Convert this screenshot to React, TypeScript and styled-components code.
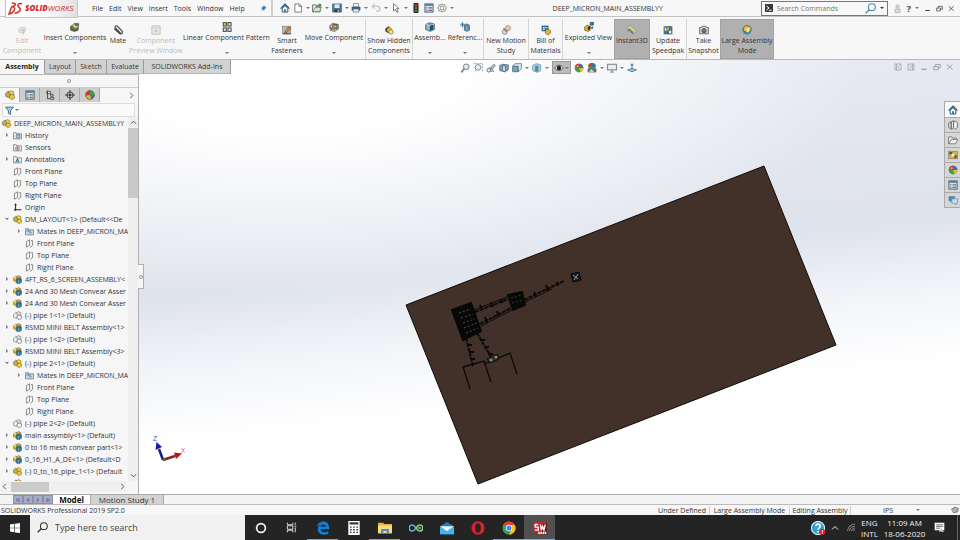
import React from "react";
import styled, { createGlobalStyle, css } from "styled-components";

const UI = `"Open Sans", "Noto Sans", sans-serif`;

const GlobalStyle = createGlobalStyle`
  * { box-sizing: border-box; }
  html, body { margin: 0; height: 100%; }
  body { font-family: ${UI}; font-size: 7px; line-height: 9px; color: #333; background: #f6f6f6; overflow: hidden; }
  button, input { font: inherit; color: inherit; }
  button { border: 0; background: none; padding: 0; margin: 0; }
  ul { list-style: none; margin: 0; padding: 0; }
`;

/* ---------- icons ---------- */

const S = styled.svg<{ $s?: number }>`
  width: ${(p) => p.$s ?? 10}px;
  height: ${(p) => p.$s ?? 10}px;
  flex: none;
  display: block;
`;

const glyphs: Record<string, React.ReactNode> = {
  home: <><path d="M1 9 8 2l7 7" fill="none" stroke="#1f4e6e" strokeWidth="2" /><path d="M3.500 8.500v6h9v-6L8 4.500z" fill="#fff" stroke="#1f4e6e" strokeWidth="1.500" /><path d="M6.500 14v-4h3v4z" fill="#2f6f96" /></>,
  doc: <path d="M3 1.500h7l3.500 3.500v9.500H3zM9.500 2v3.500h4" fill="#fff" stroke="#666" strokeWidth="1.300" />,
  open: <><path d="M1 14V3h5l1 2h6v9z" fill="#f4f4f4" stroke="#555" strokeWidth="1.300" /><path d="M1 14l4-7h10l-3 7z" fill="#ddd" stroke="#555" /><path d="M6 7c1-4 3-5 6-5V0l4 3.500L12 7V5C9 5 8 6 6 7z" fill="#4a9a3e" /></>,
  save: <><path d="M1 1.500h14v13H1z" fill="#4a7c9c" stroke="#27506b" /><path d="M4 2h8v6H4z" fill="#dce8ef" /><path d="M4 10.500h8v4H4z" fill="#333" /><path d="M9 11h2v3H9z" fill="#ddd" /></>,
  print: <><path d="M4 1h8v5H4z" fill="#fff" stroke="#456" /><path d="M1 6h14v6H1z" fill="#34637f" /><path d="M3.500 9.500h9v5h-9z" fill="#e6eef3" stroke="#34637f" /></>,
  undo: <path d="M2 5h8a4 4 0 0 1 0 8H8M6 1 2 5l4 4" fill="none" stroke="#c4c4c4" strokeWidth="2" />,
  cursor: <path d="M4 1v12l3-3 2.500 5 2-1L9 9h4z" fill="#fff" stroke="#555" strokeWidth="1.200" />,
  traffic: <><rect x="4" y="0" width="8" height="16" rx="1.500" fill="#222" /><circle cx="8" cy="3.500" r="2.300" fill="#c33" /><circle cx="8" cy="8" r="2" fill="#8a6a2b" /><circle cx="8" cy="12.500" r="2.300" fill="#2a9b3c" /></>,
  list: <><rect x="1.500" y="1.500" width="13" height="13" fill="#e8f0f5" stroke="#38576b" strokeWidth="1.500" /><path d="M2 2h12v2.500H2z" fill="#3f7697" /><path d="M3.500 7h2M3.500 9.500h2M3.500 12h2" stroke="#3f7697" strokeWidth="1.500" /><path d="M7 7h6M7 9.500h6M7 12h6" stroke="#555" strokeWidth="1.200" /></>,
  gear: <><path d="M8 1.500 10 3l2.500-.2.700 2.500L15 7.500 13.500 10l-.3 2.500-2.700.3L8 14.500l-2.300-1.700-2.800-.3L2.500 10 1 7.500l1.800-2.200L3.500 3 6 3z" fill="#f3f3f3" stroke="#777" strokeWidth="1.300" /><circle cx="8" cy="8" r="3" fill="#fff" stroke="#777" strokeWidth="1.300" /></>,
  asm: <><path d="M1 5 5 2l4 2v6l-4 2-4-2z" fill="#e2ae22" stroke="#4e4420" strokeWidth=".8" /><path d="M1 5l4 2 4-3-4-2z" fill="#f6dc73" /><path d="M6 3l4-2 4 2v4H7z" fill="#d9b040" stroke="#444" strokeWidth=".8" /><path d="M6 7l5-2 4 2v6l-5 3-4-2z" fill="#2f7398" stroke="#1d3f53" strokeWidth=".8" /><path d="M10 8.500v7" stroke="#9cc6da" strokeWidth="1.200" /></>,
  asmYellow: <><path d="M1 5 5 2l4 2v6l-4 2-4-2z" fill="#d8a821" stroke="#4e4420" strokeWidth=".8" /><path d="M6 3l4-2 4 2v5l-4 1z" fill="#f0d058" stroke="#5c4c18" strokeWidth=".8" /><path d="M7 9l4-2 4 2v4l-4 2.500L7 13z" fill="#edc63c" stroke="#5c4c18" strokeWidth=".8" /><path d="M2 6l3 1v4" stroke="#8eb9cc" strokeWidth="1.500" fill="none" /></>,
  asmGhost: <><path d="M1 6 5 3l4 2v6l-4 2-4-2z" fill="#eee" stroke="#777" strokeWidth="1.200" /><path d="M6 3l4-2 4 2v5l-4 1z" fill="#ddd" stroke="#777" strokeWidth="1.200" /><path d="M7 9l4-2 4 2v4l-4 2.500L7 13z" fill="#f5f5f5" stroke="#666" strokeWidth="1.200" /></>,
  disabled: <><path d="M2 7l4-4 7 1 1 4-6 5-5-2z" fill="#ddd" stroke="#c8c8c8" /><path d="M8 7l4 3-3 5" fill="none" stroke="#c2c2c2" strokeWidth="2" /></>,
  winGhost: <><rect x="1.500" y="1.500" width="13" height="13" fill="#eee" stroke="#bdbdbd" strokeWidth="1.500" /><path d="M2 4.500h12" stroke="#bdbdbd" /><path d="M5 8l3-2 3 2v4H5z" fill="#d0d0d0" /></>,
  clip: <path d="M13 14 4 5a2 2 0 0 1 3-3l8 8a3 3 0 0 1-4 4L2 6M10 11 5 6" fill="none" stroke="#444" strokeWidth="1.700" />,
  insert: <><path d="M1 7l5-2 7 2v6l-6 2-6-2z" fill="#4a7d42" stroke="#333" /><path d="M3 6l4-4 7 1-1 6-5 2z" fill="#e6c650" stroke="#444" /><path d="M7 2h7v4H8z" fill="#3d6e8a" /></>,
  pattern: <g strokeWidth="1.600" stroke="#444"><rect x="2" y="1" width="5" height="5.500" fill="#e9c84a" /><rect x="9.500" y="1" width="5" height="5.500" fill="#ddd" /><rect x="2" y="9.500" width="5" height="5.500" fill="#ddd" /><rect x="9.500" y="9.500" width="5" height="5.500" fill="#eee" /></g>,
  fastener: <><rect x="1" y="2" width="13" height="12" fill="#b9b9b9" stroke="#777" /><path d="M4 12l6-9 4 2-6 7z" fill="#e08a3c" stroke="#5a4632" /><path d="M2 14h12" stroke="#555" strokeWidth="2" /></>,
  move: <><path d="M1 6l5-4 9 2v7l-6 4-7-2z" fill="#c9c0a4" stroke="#444" /><path d="M6 4h7v7H6z" fill="#dcb44a" stroke="#333" /><path d="M8 6h4v3H8z" fill="#f5edc0" stroke="#444" /><path d="M2 8l3 4" stroke="#666" strokeWidth="2" /></>,
  eyeCube: <><path d="M2 6l5-4 5 3v5l-5 3-5-3z" fill="#444" /><path d="M5 6l5-3 3 3v4l-4 2-4-2z" fill="#e9b932" /><circle cx="11" cy="11" r="3.500" fill="#f4e6a2" stroke="#6b5518" /></>,
  blueCube: <><path d="M1 4l6-3 8 2v9l-7 3-7-3z" fill="#6fa3be" stroke="#345" /><path d="M1 4l7 2 7-3M5 5v8" stroke="#e6f0f5" fill="none" /><path d="M8 6l5-1.500v7L8 14z" fill="#234b62" /></>,
  reference: <><path d="M7 5l4-2 4 2v8l-4 2-4-2z" fill="#4b8fb2" stroke="#345" /><path d="M11 7v8" stroke="#bcd9e6" /><path d="M4 0v9M0 4.500h8M1.500 2l5 5M6.500 2l-5 5" stroke="#3c7796" strokeWidth="1.300" /></>,
  motion: <><circle cx="6" cy="11" r="4" fill="#d7d7d7" stroke="#666" /><circle cx="11" cy="5" r="4" fill="#eec9b4" stroke="#8a6450" /><path d="M4 5l5 6" stroke="#777" strokeWidth="2" /></>,
  bom: <><path d="M1 1h11v9H1z" fill="#34637f" /><path d="M3 3h3v2H3zM7 3h3v2H7zM3 6h3v2H3z" fill="#dce8ef" /><path d="M7 9l4-3 4 3v4l-4 3-4-3z" fill="#e4b62f" stroke="#65521b" /></>,
  exploded: <><path d="M1 8l4-3 5 2v6l-4 2-5-2z" fill="#e4b62f" stroke="#4f451f" /><path d="M10 0h5v5h-5z" fill="#3d7ea4" stroke="#234" /><path d="M6 8l4-2v5l-4 2z" fill="#333" /><circle cx="13" cy="9" r="2" fill="#3d7ea4" /></>,
  instant: <><path d="M1 4l4-3 10 9-4 4z" fill="#f3dfa0" stroke="#8a7a45" /><path d="M4 5l8 7" stroke="#caa23a" strokeWidth="2" /><path d="M1 9l3-1 6 6" fill="none" stroke="#3f7ea3" strokeWidth="2" /></>,
  update: <><rect x="1" y="2" width="14" height="13" fill="#3f7697" /><path d="M3 4h4v5H3zM9 9h4v4H9z" fill="#f5f5f5" /><path d="M5 3h6l-3 11z" fill="#e6bd36" stroke="#333" /></>,
  camera: <><path d="M1 4h3l1-2h6l1 2h3v10H1z" fill="#d9d9d9" stroke="#555" strokeWidth="1.300" /><circle cx="8" cy="9" r="3.500" fill="#777" stroke="#333" /></>,
  large: <><circle cx="8" cy="8" r="7.500" fill="#3f8db6" /><path d="M2 4l5-3 7 2v4l-5 5-6-2z" fill="#edc63c" stroke="#6b5518" /><path d="M8 6l4-1v5l-4 2z" fill="#f8e9ac" /></>,
  zoom: <><circle cx="10" cy="6" r="4.500" fill="#dfeaf0" stroke="#6d818e" strokeWidth="1.600" /><path d="M7 9l-5 6" stroke="#6d818e" strokeWidth="2.500" /></>,
  zoomArea: <><circle cx="8" cy="7" r="4.500" fill="#e5edf2" stroke="#7a8c97" strokeWidth="1.500" /><path d="M1 1h14v13M5 11l-3 4" stroke="#8b9aa3" strokeDasharray="3 1.500" fill="none" strokeWidth="1.500" /></>,
  prev: <><path d="M6 8l6-6 3 2-5 6z" fill="#a9bcc7" stroke="#5f7685" /><path d="M6 8l5 3M7 13h6" stroke="#5f7685" strokeWidth="1.500" /><circle cx="4.500" cy="11.500" r="3" fill="#e6eef3" stroke="#5f7685" strokeWidth="1.500" /></>,
  section: <><path d="M1 4l5-2 9 1v8l-6 3-8-2z" fill="#79a4bc" stroke="#3c5564" /><path d="M6 4l4 1v9l-4-1z" fill="#eef4f7" stroke="#33495a" /></>,
  orient: <><path d="M1 5h9v9H1z" fill="#6fa3be" stroke="#3c5564" /><path d="M1 5l4-4h10v8l-5 5V5z" fill="#dce9f0" stroke="#3c5564" /></>,
  display: <><path d="M1 4l6-3 7 2v9l-6 3-7-3z" fill="#a9cbdc" stroke="#5c8aa2" /><path d="M5 5l5-1v9l-5 1z" fill="#4f8cab" /></>,
  eye: <><path d="M1 8c4-6 10-6 14 0-4 5-10 5-14 0z" fill="#e9e9e9" stroke="#333" strokeWidth="1.200" /><circle cx="8" cy="8" r="3.500" fill="#222" /></>,
  ball: <><circle cx="8" cy="8" r="7" fill="#3a9e4d" /><path d="M8 8V1a7 7 0 0 1 7 7z" fill="#3a6fb8" /><path d="M8 8 1.500 5A7 7 0 0 1 8 1z" fill="#d33a30" /><path d="M8 8h7a7 7 0 0 1-5 6.500z" fill="#e9b92c" /><circle cx="6" cy="5" r="1.500" fill="#fff" opacity=".6" /></>,
  appearance: <><circle cx="8" cy="8" r="7" fill="#e9b92c" stroke="#333" /><path d="M8 8V1a7 7 0 0 1 7 7z" fill="#3a9e4d" /><path d="M8 8 1 9A7 7 0 0 1 8 1z" fill="#d33a30" /><path d="M8 8h7a7 7 0 0 1-5 6.500z" fill="#3a6fb8" /></>,
  scene: <><circle cx="8" cy="6" r="6" fill="#3a9e4d" /><path d="M8 6V0a6 6 0 0 1 6 6z" fill="#3a6fb8" /><path d="M8 6 2 5a6 6 0 0 1 6-5z" fill="#d33a30" /><path d="M1 9h14v6H1z" fill="#6a6a6a" /><path d="M3 14l4-4 5 4z" fill="#ddd" /></>,
  monitor: <><rect x="1" y="2" width="14" height="9" fill="#e9eef1" stroke="#777" strokeWidth="1.500" /><path d="M8 11v3M5 14.500h6" stroke="#777" strokeWidth="1.500" /></>,
  anchor: <><path d="M8 2v11M1 11l7 3 7-3-7-2z" fill="none" stroke="#477d9c" strokeWidth="1.600" /><path d="M5 4l3-3.500L11 4z" fill="#477d9c" /></>,
  filter: <path d="M1 2h14L10 8v7l-4-2V8z" fill="#a9cbdc" stroke="#2f5d78" strokeWidth="1.500" />,
  cfg: <><path d="M3 2h6v4H3zM9 7h4v3H9zM9 12h5v3H9z" fill="#ddd" stroke="#444" strokeWidth="1.300" /><path d="M4 1v13h4" stroke="#444" fill="none" strokeWidth="1.500" /></>,
  target: <><circle cx="8" cy="8" r="5" fill="none" stroke="#333" strokeWidth="1.500" /><path d="M8 0v16M0 8h16" stroke="#333" strokeWidth="1.500" /><circle cx="8" cy="8" r="1.500" fill="#333" /></>,
  history: <><path d="M1 14V3h5l1 2h8v9z" fill="#eef0f2" stroke="#666" strokeWidth="1.200" /><circle cx="9" cy="9" r="3.500" fill="#cfe2ec" stroke="#2f5d78" strokeWidth="1.300" /><path d="M9 7v2h2" stroke="#2f5d78" fill="none" /></>,
  sensor: <><path d="M1 14V3h5l1 2h8v9z" fill="#eef0f2" stroke="#666" strokeWidth="1.200" /><circle cx="8" cy="9.500" r="3.500" fill="#ddd" stroke="#555" /><circle cx="8" cy="9.500" r="1.500" fill="#b33" /></>,
  annot: <><path d="M1 14V3h5l1 2h8v9z" fill="#eef0f2" stroke="#666" strokeWidth="1.200" /><path d="M5 13l3-7 3 7M6 11h4" fill="none" stroke="#2f6c90" strokeWidth="1.700" /></>,
  mates: <><path d="M1 14V3h5l1 2h8v9z" fill="#c9dfea" stroke="#587180" strokeWidth="1.200" /><path d="M5 7l6 5M4 9a2 2 0 0 1 3-3l5 4" stroke="#4a6a7c" strokeWidth="1.300" fill="none" /></>,
  plane: <path d="M2.500 4.500 8 1.500v10l-5.500 3zM10 3h3.500v8.500L9 15" fill="none" stroke="#6a6a6a" strokeWidth="1.300" />,
  origin: <><path d="M4.500 1v11H15" fill="none" stroke="#333" strokeWidth="2" /><path d="M2 4l2.500-3L7 4" fill="#333" /><circle cx="4" cy="12" r="2" fill="#333" /></>,
  books: <><path d="M1 5l4-2v10l-1 1-3-2zM5 3l4-2v12l-4 2z" fill="#e6e6e6" stroke="#555" strokeWidth="1.200" /><path d="M9 3l3-1 3 2v8l-4 3-2-2z" fill="#f2f2f2" stroke="#555" strokeWidth="1.200" /></>,
  folder: <path d="M1 14V3h5l1 2h6v2M1 14l4-7h11l-4 7z" fill="#eee" stroke="#666" strokeWidth="1.200" />,
  palette: <><rect x="1" y="2" width="14" height="12" fill="#d4b641" stroke="#777" /><path d="M2 3h5v4H2zM10 8h4v5h-4z" fill="#5c6340" /><circle cx="8" cy="8" r="2.500" fill="#f5edc0" /></>,
  chat: <><path d="M1 2h10v7H6l-3 3V9H1z" fill="#4d88a7" /><path d="M6 6h9v7h-2v3l-3-3H6z" fill="#c6dfeb" stroke="#4d88a7" /></>,
  user: <><circle cx="8" cy="4.500" r="3" fill="#ddd" stroke="#999" /><path d="M3.500 15V9h9v6z" fill="#ddd" stroke="#999" /></>,
  min: <path d="M3 12.500h10" stroke="currentColor" strokeWidth="2.500" />,
  restore: <path d="M1.500 7h9v6.500h-9zM5 7V3h9.500v6.500h-4" fill="none" stroke="currentColor" strokeWidth="1.700" />,
  close: <path d="M2 3l11 10M13 3 2 13" stroke="currentColor" strokeWidth="1.800" />,
  paneL: <><rect x="2" y="2" width="12" height="12" fill="none" stroke="currentColor" strokeWidth="1.400" /><path d="M5 2v12M11 5 8 8l3 3" fill="none" stroke="currentColor" strokeWidth="1.400" /></>,
  paneR: <><rect x="2" y="2" width="12" height="12" fill="none" stroke="currentColor" strokeWidth="1.400" /><path d="M6 5l3 3-3 3M11 2v12" fill="none" stroke="currentColor" strokeWidth="1.400" /></>,
  pin: <path d="M9 1l6 6-2 .5-3 3-.5 3L6 10l-4 5 3-6-3-3 3-.5 3-3z" fill="#3a82b0" />,
  prompt: <><rect width="16" height="16" fill="#3c3c3c" /><path d="M3 4l5 4-5 4M8 12.500h5" fill="none" stroke="#fff" strokeWidth="2" /></>,
  mag: <><circle cx="10" cy="6" r="5" fill="none" stroke="currentColor" strokeWidth="1.500" /><path d="M6.500 9.500 1 15" stroke="currentColor" strokeWidth="1.800" /></>,
  right: <path d="M5 2l6 6-6 6" fill="none" stroke="#444" strokeWidth="2" />,
  left: <path d="M11 2 5 8l6 6" fill="none" stroke="#444" strokeWidth="2" />,
  up: <path d="M2 11l6-6 6 6" fill="none" stroke="currentColor" strokeWidth="2" />,
  down: <path d="M2 5l6 6 6-6" fill="none" stroke="currentColor" strokeWidth="2" />,
  sheet: <><path d="M1 6l7-4 7 3-2 7-8 2z" fill="#999" stroke="#555" /><path d="M3 8l8-3M4 11l8-3" stroke="#eee" /></>,
  windows: <path d="M0 2.300 7 1.200v6.300H0zM8 1l8-1v7.500H8zM0 8.500h7v6.300L0 13.700zM8 8.500h8V16l-8-1z" fill="#fff" />,
  cortana: <circle cx="8" cy="8" r="5" fill="none" stroke="#f0f0f0" strokeWidth="2" />,
  taskview: <path d="M2 1v3h8V1M2 15v-3h8v3M2 5.500h8v5H2zM13.500 1v3M13.500 8v7M12 6h3" fill="none" stroke="#ddd" strokeWidth="1.400" />,
  edge: <path d="M1 7.500C1.500 3 4.500.5 8.300.5 12.500.5 15 3.500 15 7.500v2H5.300c.3 4 5.500 4 8.700 2.200v3C9 17 2 15.500 2 9.500 2 7 3.500 5 6 4 4 4 2 5.500 1 7.500zm4.300-.8h5.900c0-3.700-5.500-3.700-5.900 0z" fill="#1180d8" />,
  calc: <><rect x="1.500" y="0" width="13" height="16" fill="#fff" /><path d="M3 1.500h10v2.500H3z" fill="#333" /><path d="M3.500 7h9M3.500 10h9M3.500 13h9" stroke="#333" strokeWidth="1.600" strokeDasharray="1.800 1.800" /></>,
  explorer: <><path d="M0 2h6l1 1.500h9V14H0z" fill="#e8b33a" /><path d="M0 5h16v9H0z" fill="#fbd978" /><path d="M3.500 14V9h9v5H10v-2.500H6V14z" fill="#3f93cf" /></>,
  infinity: <><path d="M8 8C6 5 5 4.500 3.800 4.500a3.300 3.300 0 0 0 0 7C5.500 11.500 7 9.500 8 8" fill="none" stroke="#59b4cb" strokeWidth="1.700" /><path d="M8 8c1-1.500 2.500-3.500 4.200-3.500a3.300 3.300 0 0 1 0 7C10.500 11.500 9 9.500 8 8M10.500 8h3" fill="none" stroke="#93cf8d" strokeWidth="1.700" /></>,
  mail: <><path d="M0 6l8-5 8 5v9H0z" fill="#1c7cc4" /><path d="M0 6h16l-8 6z" fill="#f5f5f5" /><path d="M0 6l8 6 8-6v9H0z" fill="#42b4ee" /></>,
  opera: <><ellipse cx="8" cy="8" rx="7.500" ry="7.800" fill="#e0202c" /><ellipse cx="8" cy="8" rx="3.300" ry="5.500" fill="#252525" /></>,
  chrome: <><circle cx="8" cy="8" r="7.500" fill="#34a353" /><path d="M8 8 1.500 4.200a7.500 7.500 0 0 1 13 0z" fill="#e34133" /><path d="M8 4.500h6.600A7.500 7.500 0 0 1 8 15.500L11 9z" fill="#fbc116" /><circle cx="8" cy="8" r="3.700" fill="#fff" /><circle cx="8" cy="8" r="2.900" fill="#4688f1" /></>,
  sw: <><path d="M0 2l8-2 8 2v10l-7 4-9-4z" fill="#c6212b" /><path d="M10 4l6-2v10l-6 3z" fill="#7d1018" /><path d="M6 4H2.500v3H6v3.500H2M8.500 4l1 6.500L11 6l1.500 4.500L14 4" fill="none" stroke="#fff" strokeWidth="1.500" /><path d="M6 13.500h9" stroke="#eee" strokeWidth="2.500" strokeDasharray="1.800 .6" /></>,
  help: <><circle cx="8" cy="8" r="7.500" fill="#2e9fd0" stroke="#e8f4fa" strokeWidth="1.200" /><path d="M5.500 6c0-3.500 5-3.500 5 0 0 2-2.500 2-2.500 4M8 11.500v1.500" fill="none" stroke="#fff" strokeWidth="1.800" /><circle cx="13" cy="12.500" r="3.300" fill="#e01b22" /><path d="M13 10.500v2.500M13 13.800v.8" stroke="#fff" strokeWidth="1.200" /></>,
  wifi: <path d="M1 14C2 7 7 2 14 2M4.500 14C5 9 9 5.500 14 5.500M8 14c.5-3 3-5 6-5M11 14c.5-1.500 1.500-2 3-2" fill="none" stroke="#aaa" strokeWidth="1.400" />,
  notif: <><path d="M1 1h14v11h-4l-3 3v-3H1z" fill="#fff" /><path d="M3 4h10M3 6.500h10M3 9h6" stroke="#444" strokeWidth="1.100" /><path d="M11 9a3 3 0 1 0 4 4 4 4 0 0 1-4-4z" fill="#bbb" /></>,
};

const Icon = ({ n, s }: { n: string; s?: number }) => (
  <S viewBox="0 0 16 16" $s={s} aria-hidden="true">{glyphs[n]}</S>
);

const Caret = styled.span<{ $c?: string }>`
  flex: none;
  width: 0;
  height: 0;
  border-left: 2px solid transparent;
  border-right: 2px solid transparent;
  border-top: 2px solid ${(p) => p.$c ?? "#777"};
`;

const dot = css`
  &::after {
    content: "";
    box-sizing: border-box;
    width: 4px;
    height: 4px;
    border: 1px solid #999;
    border-radius: 50%;
  }
`;

/* ---------- page frame ---------- */

const Page = styled.div`
  display: flex;
  flex-direction: column;
  height: 100vh;
`;

/* ---------- title bar ---------- */

const TitleBar = styled.header`
  display: flex;
  align-items: center;
  justify-content: space-between;
  height: 17px;
  flex: none;
  background: #f7f7f7;
  border-bottom: 1px solid #c2c2c2;
`;
const TitleLeft = styled.div`
  display: flex;
  align-items: center;
  height: 17px;
`;
const Brand = styled.div`
  display: flex;
  align-items: center;
  gap: 2px;
  align-self: flex-start;
  width: 73px;
  height: 18px;
  margin: 0 14px 0 5px;
  padding-left: 2px;
  border: 1px solid #c8c8c8;
  border-top: 0;
  background: linear-gradient(100deg, #fff 50%, #dedede);
  color: #cf2f2c;
  font: italic 8px/16px ${UI};
  z-index: 1;
  white-space: nowrap;
  b { font-weight: 800; }
`;
const Menu = styled.nav`
  display: flex;
  gap: 6px;
  margin-right: 15px;
`;
const QuickBar = styled.div`
  display: flex;
  align-items: center;
  height: 16px;
  margin-left: 4px;
  padding-left: 7px;
  border-left: 2px solid #d0d0d0;
`;
const QuickBtn = styled.button<{ $w: number }>`
  display: flex;
  align-items: center;
  gap: 3px;
  width: ${(p) => p.$w}px;
  flex: none;
`;
const DocName = styled.h1`
  margin: 0;
  font: inherit;
  white-space: nowrap;
`;
const TitleRight = styled.div`
  display: flex;
  align-items: center;
  gap: 5px;
  padding-right: 5px;
`;
const SearchBox = styled.label`
  display: flex;
  align-items: center;
  gap: 4px;
  width: 127px;
  height: 15px;
  padding: 0 3px;
  border: 1px solid #777;
  background: #f8f8f8;
  color: #4d88a7;
  input { flex: 1; min-width: 0; border: 0; outline: 0; padding: 0; background: none; color: #666; }
  input::placeholder { color: #777; opacity: 1; }
`;
const BarBtn = styled.button<{ $dim?: boolean }>`
  display: flex;
  align-items: center;
  gap: 4px;
  font-weight: 700;
  font-size: 9px;
  color: ${(p) => (p.$dim ? "#999" : "#444")};
`;

/* ---------- ribbon ---------- */

const Ribbon = styled.div`
  display: flex;
  flex: none;
  height: 43px;
  padding-top: 2px;
  background: #f7f7f7;
  border-bottom: 1px solid #b8b8b8;
`;
const Tool = styled.button<{ $w: number; $sep?: boolean; $on?: boolean; $off?: boolean; $drop?: boolean }>`
  display: flex;
  flex-direction: column;
  align-items: center;
  flex: none;
  width: ${(p) => p.$w}px;
  padding-top: ${(p) => (p.$drop ? 3 : 6)}px;
  line-height: 10px;
  white-space: nowrap;
  border-right: ${(p) => (p.$sep ? "1px solid #d4d4d4" : "0")};
  ${(p) => p.$on && css`background: #b0b0b0; border: 1px solid #a2a2a2; padding-top: 5px;`}
  ${(p) => p.$off && css`color: #bdbdbd;`}
  ${S} { margin-bottom: 1px; }
  ${Caret} { margin-top: 9px; }
`;

const tools: { i: string; t: string[]; w: number; sep?: boolean; on?: boolean; off?: boolean; drop?: boolean }[] = [
  { i: "disabled", t: ["Edit", "Component"], w: 44, off: true },
  { i: "insert", t: ["Insert Components"], w: 62, drop: true },
  { i: "clip", t: ["Mate"], w: 24 },
  { i: "winGhost", t: ["Component", "Preview Window"], w: 52, off: true },
  { i: "pattern", t: ["Linear Component Pattern"], w: 89, drop: true },
  { i: "fastener", t: ["Smart", "Fasteners"], w: 32 },
  { i: "move", t: ["Move Component"], w: 63, drop: true, sep: true },
  { i: "eyeCube", t: ["Show Hidden", "Components"], w: 47, sep: true },
  { i: "blueCube", t: ["Assemb..."], w: 34, drop: true },
  { i: "reference", t: ["Referenc..."], w: 37, drop: true, sep: true },
  { i: "motion", t: ["New Motion", "Study"], w: 45, sep: true },
  { i: "bom", t: ["Bill of", "Materials"], w: 34, sep: true },
  { i: "exploded", t: ["Exploded View"], w: 51, drop: true },
  { i: "instant", t: ["Instant3D"], w: 36, on: true },
  { i: "update", t: ["Update", "Speedpak"], w: 37, sep: true },
  { i: "camera", t: ["Take", "Snapshot"], w: 33 },
  { i: "large", t: ["Large Assembly", "Mode"], w: 54, on: true },
];

/* ---------- workspace ---------- */

const Workspace = styled.main`
  display: flex;
  flex-direction: column;
  flex: 1;
  min-height: 0;
  background:
    radial-gradient(ellipse 60% 55% at 30% 0%, #fff 30%, rgba(255, 255, 255, 0)),
    linear-gradient(174deg, #eceef4 0%, #e3e6ee 30%, #dfe3ec 48%, #f3f5f9 62%, #fff 75%);
`;
const TopStrip = styled.div`
  display: flex;
  flex: none;
  align-items: flex-start;
  height: 14px;
`;
const TabList = styled.div`
  display: flex;
  flex: none;
  width: 231px;
  margin-right: 229px;
`;
const CmdTab = styled.button<{ $on?: boolean; $w: number }>`
  width: ${(p) => p.$w}px;
  height: 14px;
  white-space: nowrap;
  background: ${(p) => (p.$on ? "#f7f7f7" : "#d2d2d2")};
  border-right: 1px solid #999;
  border-bottom: 1px solid ${(p) => (p.$on ? "#f7f7f7" : "#b5b5b5")};
  ${(p) => p.$on && css`font-weight: 700; color: #222;`}
`;
const ViewTools = styled.div`
  display: flex;
  align-items: center;
  gap: 3px;
  padding-top: 1px;
`;
const ViewBtn = styled.button<{ $on?: boolean }>`
  display: flex;
  align-items: center;
  gap: 3px;
  height: 13px;
  ${(p) => p.$on && css`background: #bbb; border: 1px solid #999; padding: 0 1px; gap: 1px;`}
`;
const DocButtons = styled.div`
  display: flex;
  align-items: center;
  gap: 5px;
  margin-left: auto;
  padding: 3px 6px 0 0;
  color: #999;
`;
const Body = styled.div`
  display: flex;
  flex: 1;
  min-height: 0;
`;
const SidePanel = styled.aside`
  display: flex;
  flex-direction: column;
  flex: none;
  width: 139px;
  background: #f6f6f6;
  border-top: 1px solid #b8b8b8;
  border-right: 1px solid #b0b0b0;
`;
const Grip = styled.div`
  display: flex;
  align-items: center;
  justify-content: center;
  height: 13px;
  flex: none;
  border-bottom: 1px solid #ccc;
  ${dot}
`;
const PanelTabs = styled.div`
  display: flex;
  align-items: center;
  height: 14px;
  flex: none;
  > :last-child { margin: 0 3px 0 auto; }
`;
const PanelTab = styled.button<{ $on?: boolean }>`
  display: flex;
  align-items: center;
  justify-content: center;
  width: 20px;
  height: 14px;
  background: ${(p) => (p.$on ? "#f7f7f7" : "#cdcdcd")};
  border-right: 1px solid #aaa;
`;
const FilterRow = styled.div`
  display: flex;
  align-items: center;
  gap: 1px;
  height: 14px;
  flex: none;
  margin: 1px 3px 0 2px;
  padding-left: 2px;
  border: 1px solid #ddd;
  background: #fafafa;
`;
const TreeArea = styled.div`
  display: flex;
  flex: 1;
  min-height: 0;
`;
const Tree = styled.ul`
  flex: 1;
  min-width: 0;
  overflow: hidden;
`;
const TreeRow = styled.li<{ $level: number }>`
  display: flex;
  align-items: center;
  gap: 3px;
  height: 12px;
  padding-left: ${(p) => (p.$level < 0 ? 2 : 3 + p.$level * 12)}px;
  white-space: nowrap;
`;
const Toggle = styled.button<{ $state?: string }>`
  display: flex;
  align-items: center;
  justify-content: center;
  width: 7px;
  flex: none;
  ${Caret} { transform: rotate(${(p) => (p.$state === "closed" ? -90 : 0)}deg); }
`;
const VScroll = styled.div`
  display: flex;
  flex-direction: column;
  align-items: center;
  justify-content: space-between;
  width: 10px;
  flex: none;
  padding: 2px 0;
  background: #efefef;
  color: #444;
`;
const VThumb = styled.div`
  width: 10px;
  height: 70px;
  margin: 2px 0 auto;
  background: #c9c9c9;
`;
const HScroll = styled.div`
  display: flex;
  align-items: center;
  height: 11px;
  flex: none;
  margin: 0 12px 2px 1px;
  background: #f0f0f0;
  > :last-child { margin-left: auto; }
`;
const HThumb = styled.div`
  width: 38px;
  height: 10px;
  margin-left: 3px;
  background: #cbcbcb;
`;

type Row = [string, string, number, string?];
const rows: Row[] = [
  ["asmYellow", "DEEP_MICRON_MAIN_ASSEMBLYY", -1],
  ["history", "History", 0, "closed"],
  ["sensor", "Sensors", 0],
  ["annot", "Annotations", 0, "closed"],
  ["plane", "Front Plane", 0],
  ["plane", "Top Plane", 0],
  ["plane", "Right Plane", 0],
  ["origin", "Origin", 0],
  ["asmYellow", "DM_LAYOUT<1> (Default<<De", 0, "open"],
  ["mates", "Mates in DEEP_MICRON_MA", 1, "closed"],
  ["plane", "Front Plane", 1],
  ["plane", "Top Plane", 1],
  ["plane", "Right Plane", 1],
  ["asm", "4FT_RS_6_SCREEN_ASSEMBLY<", 0, "closed"],
  ["asm", "24 And 30 Mesh Convear Asser", 0, "closed"],
  ["asm", "24 And 30 Mesh Convear Asser", 0, "closed"],
  ["asmGhost", "(-) pipe 1<1> (Default)", 0],
  ["asm", "RSMD MINI BELT Assembly<1>", 0, "closed"],
  ["asmGhost", "(-) pipe 1<2> (Default)", 0],
  ["asm", "RSMD MINI BELT Assembly<3>", 0, "closed"],
  ["asmYellow", "(-) pipe 2<1> (Default)", 0, "open"],
  ["mates", "Mates in DEEP_MICRON_MA", 1, "closed"],
  ["plane", "Front Plane", 1],
  ["plane", "Top Plane", 1],
  ["plane", "Right Plane", 1],
  ["asmGhost", "(-) pipe 2<2> (Default)", 0],
  ["asm", "main assymbly<1> (Default)", 0, "closed"],
  ["asm", "0 to 16 mesh convear part<1>", 0, "closed"],
  ["asm", "0_16_H1_A_DE<1> (Default<D", 0, "closed"],
  ["asmYellow", "(-) 0_to_16_pipe_1<1> (Default", 0, "closed"],
  ["asmYellow", "", 0],
];

const Viewport = styled.section`
  position: relative;
  flex: 1;
  min-width: 0;
`;
const Scene = styled.svg`
  display: block;
  width: 100%;
  height: 100%;
`;
const Flyout = styled.button`
  position: absolute;
  left: -1px;
  top: 190px;
  width: 6px;
  height: 25px;
  border: 1px solid #b0b0b0;
  border-left: 0;
  background: #f6f6f6;
  display: flex;
  align-items: center;
  justify-content: center;
  ${dot}
`;
const TaskPane = styled.div`
  position: absolute;
  right: 0;
  top: 27px;
  display: flex;
  flex-direction: column;
  border: 1px solid #aaa;
  border-right: 0;
`;
const PaneBtn = styled.button<{ $on?: boolean }>`
  display: flex;
  align-items: center;
  justify-content: center;
  width: 15px;
  height: 15px;
  background: ${(p) => (p.$on ? "#fafafa" : "#d6d6d6")};
  & + & { border-top: 1px solid #aaa; }
`;

/* ---------- bottom bars ---------- */

const SheetBar = styled.div`
  display: flex;
  flex: none;
  height: 11px;
  padding-left: 13px;
  background: #f4f4f4;
  border-top: 1px solid #aaa;
  border-bottom: 1px solid #bbb;
`;
const SheetNav = styled.button`
  width: 10px;
  display: flex;
  align-items: center;
  justify-content: center;
  background: #a9aac4;
  border: 1px solid #8d8eae;
`;
const SheetTab = styled.button<{ $on?: boolean; $w: number }>`
  width: ${(p) => p.$w}px;
  background: ${(p) => (p.$on ? "#fff" : "#d2d2d2")};
  border-right: 1px solid #aaa;
  line-height: 9px;
  white-space: nowrap;
  font-size: 8px;
  ${(p) => p.$on && css`font-weight: 700; color: #111;`}
`;
const StatusBar = styled.footer`
  display: flex;
  align-items: center;
  flex: none;
  height: 10px;
  padding: 0 1px;
  background: #f7f7f7;
  white-space: nowrap;
  > :first-child { margin-right: auto; }
`;
const StatusItem = styled.span<{ $w?: number; $line?: boolean }>`
  display: flex;
  justify-content: center;
  width: ${(p) => (p.$w ? `${p.$w}px` : "auto")};
  border-right: ${(p) => (p.$line ? "1px solid #d0d0d0" : "0")};
`;
const TaskBar = styled.div`
  display: flex;
  align-items: stretch;
  flex: none;
  height: 25px;
  background: #242424;
  color: #f0f0f0;
`;
const TaskBtn = styled.button<{ $run?: boolean; $on?: boolean; $w?: number }>`
  display: flex;
  align-items: center;
  justify-content: center;
  flex: none;
  width: ${(p) => p.$w ?? 31}px;
  background: ${(p) => (p.$on ? "#505050" : "none")};
  box-shadow: ${(p) => (p.$run ? "inset 0 -1px 0 #8ea6c8" : "none")};
`;
const TaskSearch = styled.label`
  display: flex;
  align-items: center;
  gap: 7px;
  width: 215px;
  flex: none;
  padding-left: 7px;
  background: #f1f1f1;
  color: #333;
  input { flex: 1; min-width: 0; border: 0; outline: 0; padding: 0; background: none; font-size: 9px; }
  input::placeholder { color: #444; opacity: 1; }
`;
const Tray = styled.div`
  display: flex;
  align-items: center;
  margin-left: auto;
`;
const ShowDesktop = styled.button`
  align-self: stretch;
  width: 3px;
  margin-left: 7px;
  border-left: 1px solid #666;
`;
const Clock = styled.div<{ $w: number }>`
  width: ${(p) => p.$w}px;
  text-align: center;
  line-height: 11px;
  font-size: 8px;
  white-space: nowrap;
`;

const Model = () => (
  <Scene viewBox="139 74 821 420" preserveAspectRatio="xMidYMid meet" aria-hidden="true">
    <path d="M406 305 764 166 836 345 478 484z" fill="#423129" stroke="#0e0b09" />
    <g stroke="#0b0908" strokeWidth="2">
      <path d="M475 312 508 299M480 324 511 308M524 300 564 281M466 338 473 366M477 333 491 357" strokeDasharray="4 1" />
      <path d="M474 310 507 297M481 326 512 310M525 302 552 289" strokeWidth="1" />
      <path d="M467 345h5M469 352h5M471 359h4M480 340h5M484 347h5M488 354h5" />
    </g>
    <path d="M480 305l2 5M491 302l2 5M501 299l1 4M485 317l2 6M497 311l1 5M534 292l2 5M546 285l2 6M557 282l1 4" stroke="#0b0908" strokeWidth="2" />
    <path d="M452 310 471 303 481 331 463 340z" fill="#080808" stroke="#080808" strokeWidth="2" />
    <path d="M459 313l12-4M461 318l12-4M463 323l12-4M464 328l13-5M466 333l12-5" stroke="#4c4c4c" strokeWidth="1" strokeDasharray="2 2" />
    <path d="M508 295 522 292 525 305 513 310z" fill="#080808" stroke="#080808" strokeWidth="2" />
    <path d="M511 298l10-3M512 303l11-3" stroke="#2f3538" strokeDasharray="2 2" />
    <path d="M571 274 579 272 581 280 573 282z" fill="#171a1c" stroke="#060606" />
    <path d="M573 275l5 4M578 274l-4 6" stroke="#8ea0aa" />
    <path d="M470 389 463 367 484 361 491 382M484 364 510 353 517 374" fill="none" stroke="#0b0908" strokeWidth="1.300" />
    <path d="M487 359l10-5 2 5-9 4z" fill="#33322c" stroke="#0b0908" />
    <circle cx="491" cy="360" r="1.500" fill="#8b8b80" />
    <circle cx="496" cy="357" r="1.500" fill="#8b8b80" />
    <g strokeWidth="2.500">
      <path d="M163 460 175 456" stroke="#8d1f1f" />
      <path d="M174 452.500 182 453.500 176 459z" fill="#b01818" />
      <path d="M163 460 159 449" stroke="#1a1a8c" />
      <path d="M155.500 450 156.500 442 162 447z" fill="#1a1aa8" />
    </g>
    <circle cx="164" cy="459" r="1.500" fill="#2d7a3a" />
    <text x="153" y="441" fontSize="7" fill="#4a4ab8">Z</text>
    <text x="181" y="453" fontSize="7" fill="#d06060">X</text>
  </Scene>
);

const quick: [string, number, boolean, string][] = [
  ["home", 13, false, "Home"], ["doc", 19, true, "New"], ["open", 20, true, "Open"], ["save", 19, true, "Save"],
  ["print", 20, true, "Print"], ["undo", 20, true, "Undo"], ["cursor", 20, true, "Select"],
  ["traffic", 13, false, "Rebuild"], ["list", 13, false, "File properties"], ["gear", 18, true, "Options"],
];
const viewIcons: [string, boolean, boolean?][] = [
  ["zoom", false], ["zoomArea", false], ["prev", false], ["section", false], ["orient", true],
  ["display", true], ["eye", true, true], ["ball", false], ["scene", true], ["monitor", true], ["anchor", false],
];
const apps: [string, boolean, boolean?][] = [
  ["cortana", false], ["taskview", false], ["edge", true], ["calc", false], ["explorer", true], ["infinity", false],
  ["mail", false], ["opera", false], ["chrome", true], ["sw", true, true],
];

export default function App() {
  return (
    <Page>
      <GlobalStyle />
      <TitleBar>
        <TitleLeft>
          <Brand>
            <S viewBox="0 0 16 14" $s={15} aria-hidden="true">
              <path d="M4 1c5 0 5 3 0 4M5 5c4 0 2 7-4 8l3-8M15 2c-4-1-6 2-3 4s0 6-5 6" fill="none" stroke="#cf2f2c" strokeWidth="1.600" />
            </S>
            <span><b>SOLID</b>WORKS</span>
          </Brand>
          <Menu>
            {["File", "Edit", "View", "Insert", "Tools", "Window", "Help"].map((m) => <button key={m}>{m}</button>)}
          </Menu>
          <Icon n="pin" s={7} />
          <QuickBar>
            {quick.map(([n, w, c, l]) => (
              <QuickBtn key={n} $w={w} aria-label={l}><Icon n={n} />{c && <Caret />}</QuickBtn>
            ))}
          </QuickBar>
        </TitleLeft>
        <DocName>DEEP_MICRON_MAIN_ASSEMBLYY</DocName>
        <TitleRight>
          <SearchBox>
            <Icon n="prompt" s={8} />
            <input placeholder="Search Commands" aria-label="Search Commands" />
            <Icon n="mag" s={11} />
            <Caret $c="#333" />
          </SearchBox>
          <BarBtn aria-label="Account"><Icon n="user" s={9} /></BarBtn>
          <BarBtn>?<Caret /></BarBtn>
          <BarBtn aria-label="Minimize"><Icon n="min" s={7} /></BarBtn>
          <BarBtn aria-label="Restore"><Icon n="restore" s={7} /></BarBtn>
          <BarBtn aria-label="Close"><Icon n="close" s={7} /></BarBtn>
        </TitleRight>
      </TitleBar>

      <Ribbon>
        {tools.map((t) => (
          <Tool key={t.t[0]} $w={t.w} $sep={t.sep} $on={t.on} $off={t.off} $drop={t.drop} disabled={t.off}>
            <Icon n={t.i} />
            {t.t.map((line) => <span key={line}>{line}</span>)}
            {t.drop && <Caret />}
          </Tool>
        ))}
      </Ribbon>

      <Workspace>
        <TopStrip>
          <TabList>
            <CmdTab $w={45} $on>Assembly</CmdTab>
            <CmdTab $w={31}>Layout</CmdTab>
            <CmdTab $w={31}>Sketch</CmdTab>
            <CmdTab $w={37}>Evaluate</CmdTab>
            <CmdTab $w={87}>SOLIDWORKS Add-Ins</CmdTab>
          </TabList>
          <ViewTools>
            {viewIcons.map(([n, c, on]) => (
              <ViewBtn key={n} $on={on} aria-label={n}><Icon n={n} />{c && <Caret />}</ViewBtn>
            ))}
          </ViewTools>
          <DocButtons>
            {["paneL", "paneR", "min", "restore", "close"].map((n) => (
              <BarBtn key={n} $dim aria-label={n}><Icon n={n} s={8} /></BarBtn>
            ))}
          </DocButtons>
        </TopStrip>
        <Body>
          <SidePanel>
            <Grip />
            <PanelTabs>
              <PanelTab $on aria-label="Design tree"><Icon n="asmYellow" /></PanelTab>
              <PanelTab aria-label="Properties"><Icon n="list" /></PanelTab>
              <PanelTab aria-label="Configurations"><Icon n="cfg" /></PanelTab>
              <PanelTab aria-label="Dimensions"><Icon n="target" /></PanelTab>
              <PanelTab aria-label="Appearances"><Icon n="appearance" /></PanelTab>
              <Icon n="right" s={7} />
            </PanelTabs>
            <FilterRow><Icon n="filter" s={9} /><Caret /></FilterRow>
            <TreeArea>
              <Tree>
                {rows.map(([icon, text, level, state], i) => (
                  <TreeRow key={i} $level={level}>
                    {level >= 0 && <Toggle $state={state} aria-label="Toggle">{state && <Caret />}</Toggle>}
                    <Icon n={icon} s={9} />
                    {text}
                  </TreeRow>
                ))}
              </Tree>
              <VScroll><Icon n="up" s={7} /><VThumb /><Icon n="down" s={7} /></VScroll>
            </TreeArea>
            <HScroll><Icon n="left" s={7} /><HThumb /><Icon n="right" s={7} /></HScroll>
          </SidePanel>
          <Viewport>
            <Model />
            <Flyout aria-label="Collapse panel" />
            <TaskPane>
              {["home", "books", "folder", "palette", "ball", "list", "chat"].map((n, i) => (
                <PaneBtn key={n} $on={i === 0} aria-label={n}><Icon n={n} /></PaneBtn>
              ))}
            </TaskPane>
          </Viewport>
        </Body>
      </Workspace>

      <SheetBar>
        {["M11 3 6 8l5 5zM4 3v10", "M10 3 5 8l5 5z", "M6 3l5 5-5 5z", "M5 3l5 5-5 5zM12 3v10"].map((d) => (
          <SheetNav key={d} aria-label="Scroll tabs">
            <S viewBox="0 0 16 16" $s={6}><path d={d} fill="#7475a0" stroke="#7475a0" strokeWidth="2" /></S>
          </SheetNav>
        ))}
        <SheetTab $w={38} $on>Model</SheetTab>
        <SheetTab $w={73}>Motion Study 1</SheetTab>
      </SheetBar>
      <StatusBar>
        <span>SOLIDWORKS Professional 2019 SP2.0</span>
        <StatusItem $w={55} $line>Under Defined</StatusItem>
        <StatusItem $w={80} $line>Large Assembly Mode</StatusItem>
        <StatusItem $w={61} $line>Editing Assembly</StatusItem>
        <StatusItem $w={9} $line />
        <StatusItem $w={56}>IPS</StatusItem>
        <Caret />
        <StatusItem $w={31} />
        <Icon n="sheet" s={8} />
      </StatusBar>
      <TaskBar>
        <TaskBtn $w={30} aria-label="Start"><Icon n="windows" /></TaskBtn>
        <TaskSearch>
          <Icon n="mag" s={11} />
          <input placeholder="Type here to search" aria-label="Type here to search" />
        </TaskSearch>
        {apps.map(([n, run, on]) => (
          <TaskBtn key={n} $run={run} $on={on} aria-label={n}><Icon n={n} s={n === "taskview" ? 11 : 14} /></TaskBtn>
        ))}
        <Tray>
          <TaskBtn $w={19} aria-label="Help"><Icon n="help" s={14} /></TaskBtn>
          <TaskBtn $w={16} aria-label="Hidden icons"><Icon n="up" s={8} /></TaskBtn>
          <TaskBtn $w={16} aria-label="Network"><Icon n="wifi" s={9} /></TaskBtn>
          <Clock $w={21}>ENG<br />INTL</Clock>
          <Clock $w={49}>11:09 AM<br />18-06-2020</Clock>
          <TaskBtn $w={21} aria-label="Notifications"><Icon n="notif" s={11} /></TaskBtn>
          <ShowDesktop aria-label="Show desktop" />
        </Tray>
      </TaskBar>
    </Page>
  );
}
